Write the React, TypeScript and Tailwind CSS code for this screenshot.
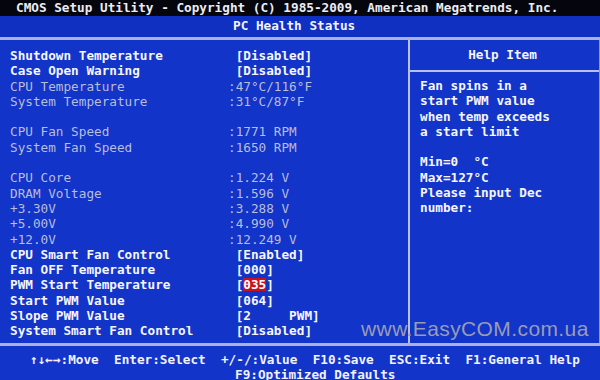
import React from "react";

type Row = { label: string; value: string; kind: "w" | "g" | "blank"; hl?: boolean };

const rows: Row[] = [
  { label: "Shutdown Temperature", value: " [Disabled]", kind: "w" },
  { label: "Case Open Warning", value: " [Disabled]", kind: "w" },
  { label: "CPU Temperature", value: ":47°C/116°F", kind: "g" },
  { label: "System Temperature", value: ":31°C/87°F", kind: "g" },
  { label: "", value: "", kind: "blank" },
  { label: "CPU Fan Speed", value: ":1771 RPM", kind: "g" },
  { label: "System Fan Speed", value: ":1650 RPM", kind: "g" },
  { label: "", value: "", kind: "blank" },
  { label: "CPU Core", value: ":1.224 V", kind: "g" },
  { label: "DRAM Voltage", value: ":1.596 V", kind: "g" },
  { label: "+3.30V", value: ":3.288 V", kind: "g" },
  { label: "+5.00V", value: ":4.990 V", kind: "g" },
  { label: "+12.0V", value: ":12.249 V", kind: "g" },
  { label: "CPU Smart Fan Control", value: " [Enabled]", kind: "w" },
  { label: "Fan OFF Temperature", value: " [000]", kind: "w" },
  { label: "PWM Start Temperature", value: "", kind: "w", hl: true },
  { label: "Start PWM Value", value: " [064]", kind: "w" },
  { label: "Slope PWM Value", value: " [2     PWM]", kind: "w" },
  { label: "System Smart Fan Control", value: " [Disabled]", kind: "w" },
];

const help = [
  "Fan spins in a",
  "start PWM value",
  "when temp exceeds",
  "a start limit",
  "",
  "Min=0  °C",
  "Max=127°C",
  "Please input Dec",
  "number:",
];

export default function App() {
  return (
    <div className="relative w-[600px] h-[380px] overflow-hidden bg-[#1234c8] font-['DejaVu_Sans_Mono','Liberation_Mono',monospace] text-[12.7px] whitespace-pre">
      <div className="h-[16px] bg-[#05060d] flex items-center pl-[16px] font-bold text-[#ececf4] leading-none">
        CMOS Setup Utility - Copyright (C) 1985-2009, American Megatrends, Inc.
      </div>
      <div className="h-[21px] bg-[#0f30c0] flex items-center pl-[233px] font-bold text-[#f4f4ff] leading-none">
        PC Health Status
      </div>
      <div className="h-[3px] bg-[#aab2dc]" />
      <div className="flex h-[303px]">
        <div className="w-[408px] pt-[8px] pl-[10px] leading-[15.3px]">
          {rows.map((r, i) =>
            r.kind === "blank" ? (
              <div key={i} className="h-[15.3px]" />
            ) : (
              <div
                key={i}
                className={
                  "grid grid-cols-[218px_1fr] h-[15.3px] " +
                  (r.kind === "w" ? "font-bold text-[#f6f6ff]" : "text-[#b8bedc]")
                }
              >
                <span>{r.label}</span>
                {r.hl ? (
                  <span>
                    {" ["}
                    <span className="inline-block bg-[#c8101e] text-white h-[13px] leading-[13px]">035</span>
                    {"]"}
                  </span>
                ) : (
                  <span>{r.value}</span>
                )}
              </div>
            )
          )}
        </div>
        <div className="w-[2px] bg-[#b8c0e6]" />
        <div className="flex-1 flex flex-col">
          <div className="h-[30px] flex items-center justify-center font-bold text-[#f6f6ff] pr-[4px]">Help Item</div>
          <div className="h-[2px] bg-[#b8c0e6]" />
          <div className="pt-[6px] pl-[10px] leading-[15.3px] font-bold text-[#f6f6ff]">
            {help.map((h, i) => (
              <div key={i} className="h-[15.3px]">
                {h}
              </div>
            ))}
          </div>
        </div>
        <div className="w-[1px] bg-[#8e98d4]" />
      </div>
      <div className="h-[3px] bg-[#aab2dc]" />
      <div className="pt-[6px] leading-[15.3px] font-bold text-[#f2f2fc]">
        <div className="pl-[30px] h-[15.3px]">↑↓←→:Move  Enter:Select  +/-/:Value  F10:Save  ESC:Exit  F1:General Help</div>
        <div className="pl-[235px] h-[15.3px]">F9:Optimized Defaults</div>
      </div>
      <div className="absolute left-[361px] top-[318px] font-['Liberation_Sans',Arial,sans-serif] text-[21px] leading-[21px] tracking-[0.4px] text-[#979cb6]">
        www.EasyCOM.com.ua
      </div>
    </div>
  );
}
